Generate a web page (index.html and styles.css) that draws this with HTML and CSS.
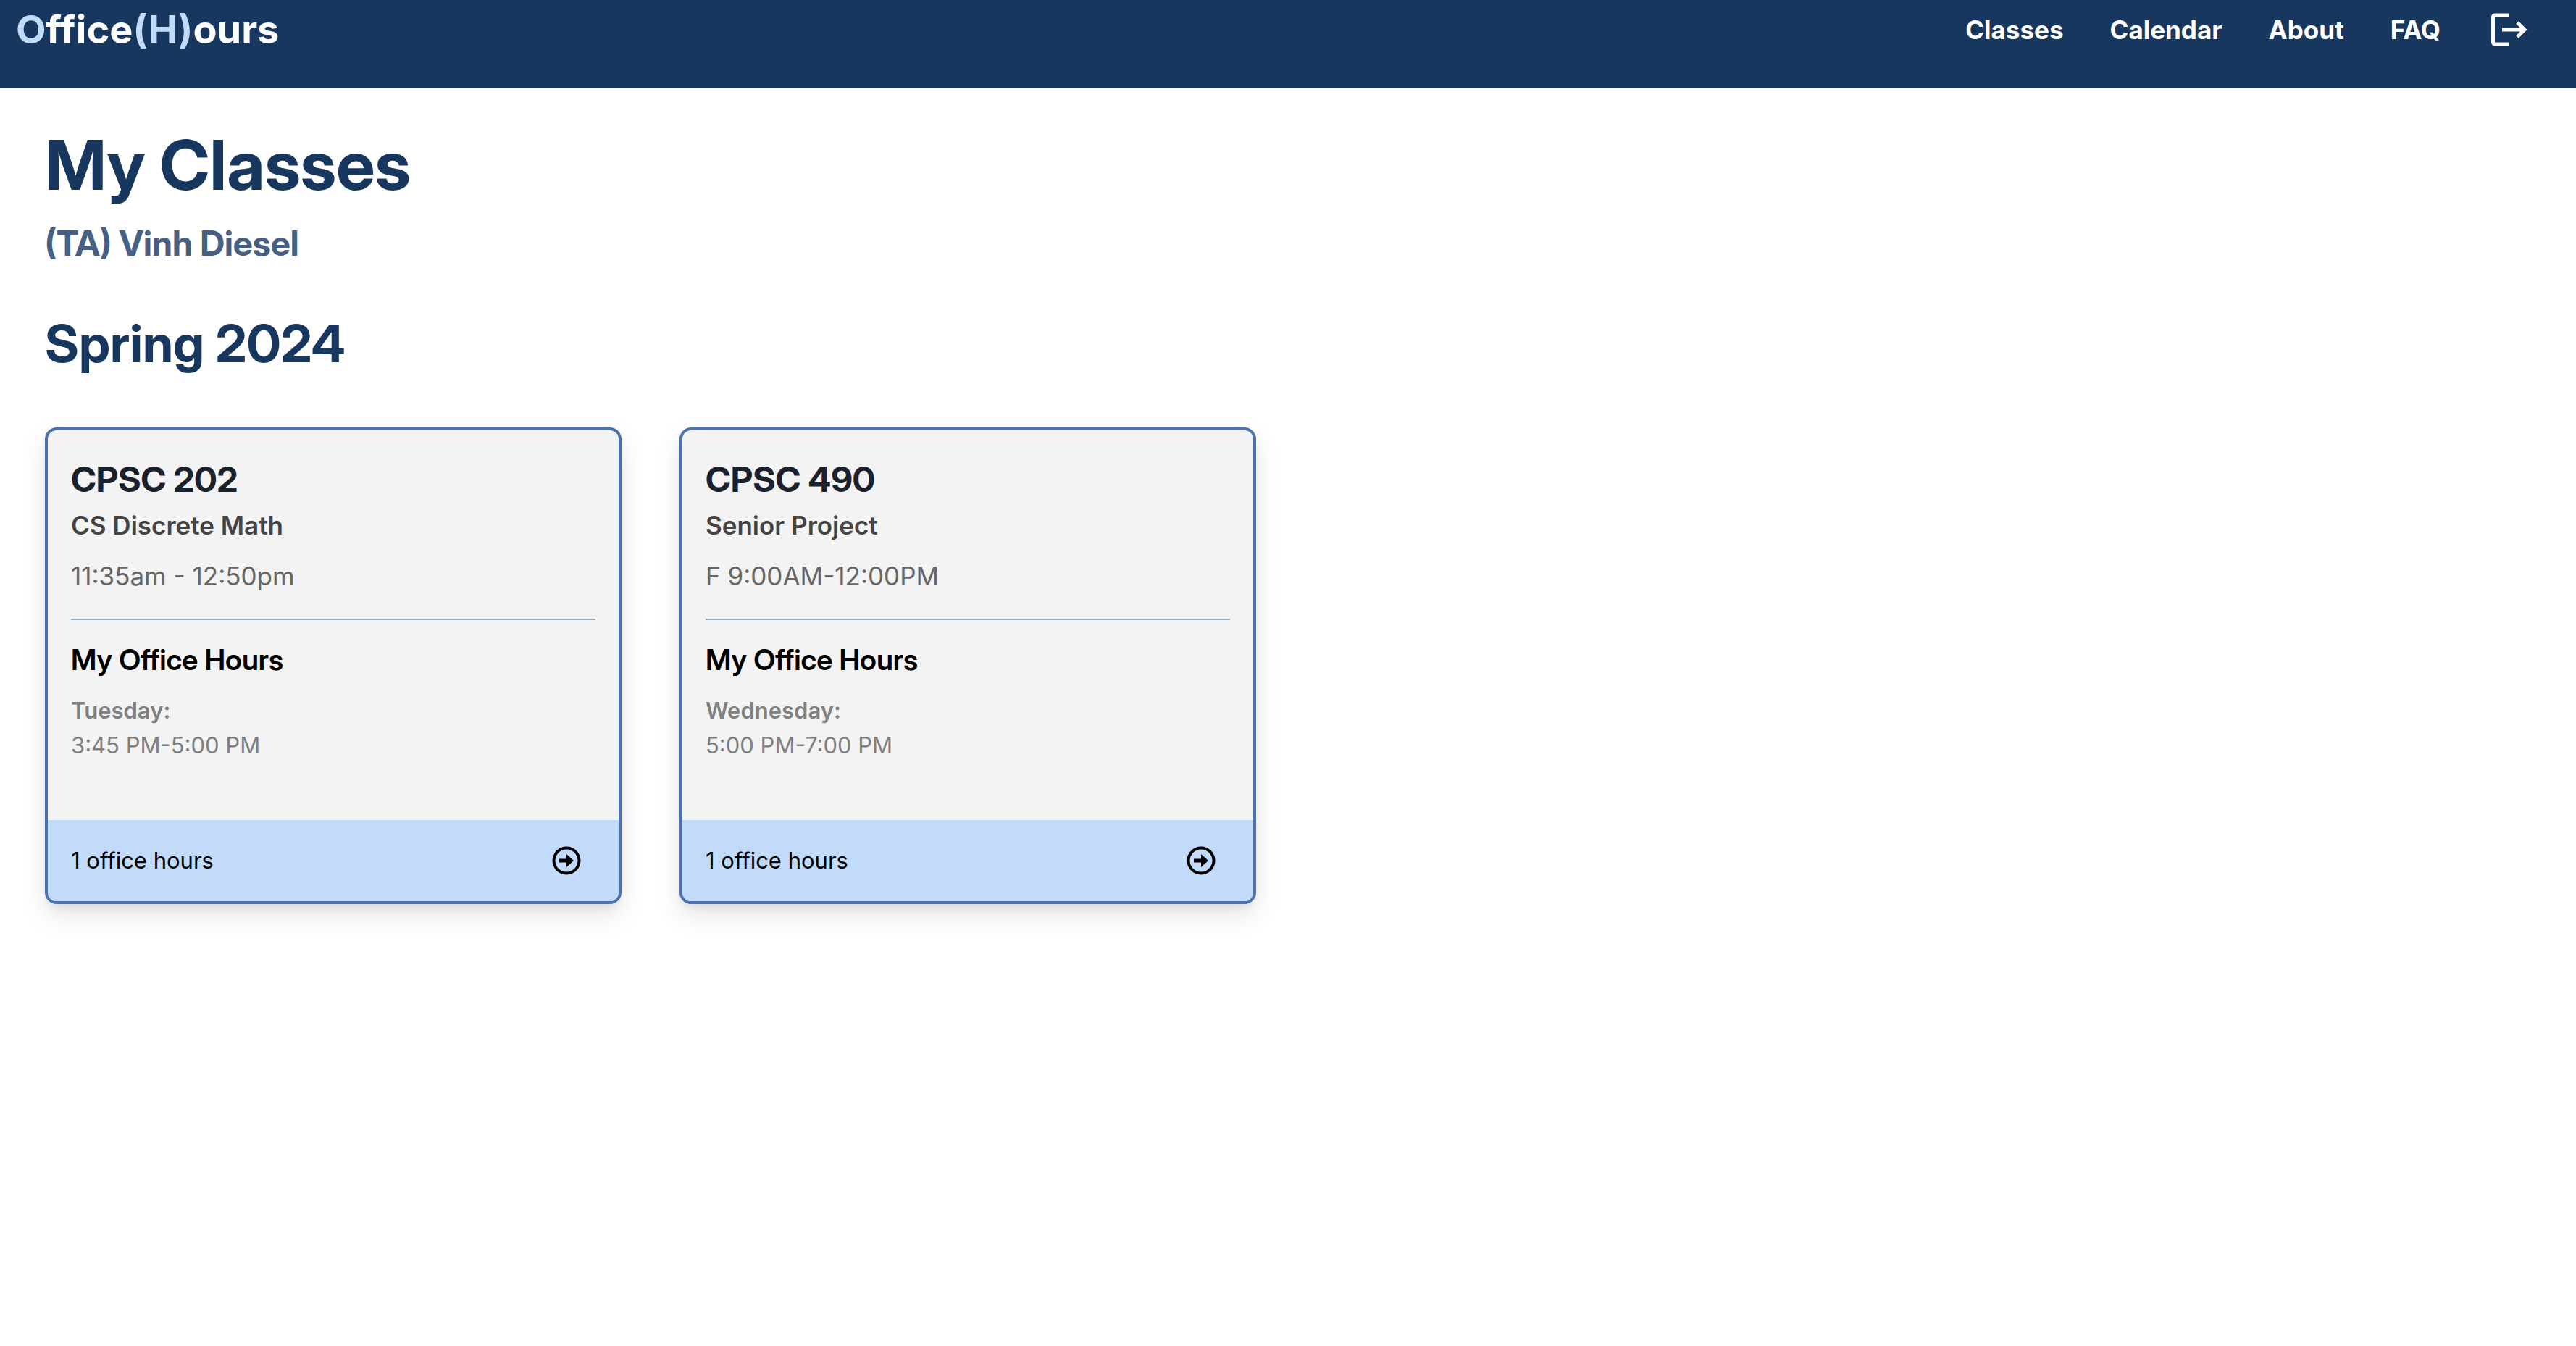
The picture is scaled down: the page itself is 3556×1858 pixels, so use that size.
FILE: index.html
```html
<!DOCTYPE html>
<html lang="en">
<head>
<meta charset="utf-8">
<meta name="viewport" content="width=device-width, initial-scale=1">
<title>Office(H)ours</title>
<link rel="stylesheet" href="styles.css">
</head>
<body>
<header class="site-header">
  <a class="logo" href="#"><span class="logo-accent">O</span>ffice<span class="logo-accent">(H)</span>ours</a>
  <nav class="nav">
    <a href="#classes">Classes</a>
    <a href="#calendar">Calendar</a>
    <a href="#about">About</a>
    <a href="#faq">FAQ</a>
    <button class="icon-button" type="button" aria-label="Log out">
      <svg class="logout-icon" viewBox="0 0 56 48" fill="none" stroke="currentColor" stroke-width="5">
        <path d="M31 4H11a2.500 2.500 0 0 0-2.500 2.500V41.500a2.500 2.500 0 0 0 2.500 2.500H31"/>
        <path d="M21 24H51M42 14L52 24L42 34"/>
      </svg>
    </button>
  </nav>
</header>
<main class="page">
  <h1 class="page-title">My Classes</h1>
  <p class="user-name">(TA) Vinh Diesel</p>
  <h2 class="term">Spring 2024</h2>
  <div class="class-grid">
    <article class="card">
      <div class="card-body">
        <h3 class="course-code">CPSC 202</h3>
        <p class="course-name">CS Discrete Math</p>
        <p class="course-time">11:35am - 12:50pm</p>
        <hr class="divider">
        <h4 class="hours-title">My Office Hours</h4>
        <p class="hours-day">Tuesday:</p>
        <p class="hours-time">3:45 PM-5:00 PM</p>
      </div>
      <footer class="card-footer">
        <span>1 office hours</span>
        <button class="icon-button" type="button" aria-label="Open CPSC 202">
          <svg class="arrow-icon" viewBox="0 0 48 48">
            <circle cx="24" cy="24" r="17.500" fill="none" stroke="currentColor" stroke-width="4"/>
            <path d="M14 21.500H24V15L34 24L24 33V26.500H14Z" fill="currentColor"/>
          </svg>
        </button>
      </footer>
    </article>
    <article class="card">
      <div class="card-body">
        <h3 class="course-code">CPSC 490</h3>
        <p class="course-name">Senior Project</p>
        <p class="course-time">F 9:00AM-12:00PM</p>
        <hr class="divider">
        <h4 class="hours-title">My Office Hours</h4>
        <p class="hours-day">Wednesday:</p>
        <p class="hours-time">5:00 PM-7:00 PM</p>
      </div>
      <footer class="card-footer">
        <span>1 office hours</span>
        <button class="icon-button" type="button" aria-label="Open CPSC 490">
          <svg class="arrow-icon" viewBox="0 0 48 48">
            <circle cx="24" cy="24" r="17.500" fill="none" stroke="currentColor" stroke-width="4"/>
            <path d="M14 21.500H24V15L34 24L24 33V26.500H14Z" fill="currentColor"/>
          </svg>
        </button>
      </footer>
    </article>
  </div>
</main>
</body>
</html>
```
FILE: styles.css
```css
* { box-sizing: border-box; }

body,
h1,
h2,
h3,
h4,
p { margin: 0; }

body {
  background: #fff;
  color: #000;
  font-family: Inter, "Liberation Sans", sans-serif;
}

/* Headings use the display cut of Inter */
.page-title,
.user-name,
.term,
.course-code,
.hours-title { font-family: "Inter Display", Inter, "Liberation Sans", sans-serif; }

.site-header {
  display: flex;
  justify-content: space-between;
  align-items: center;
  padding: 0 67px 42px 22px;
  background: #17375e;
  color: #fff;
}

.logo {
  color: #fff;
  font-size: 54px;
  font-weight: 700;
  line-height: 82px;
  text-decoration: none;
}

.logo-accent { color: #c3dbfb; }

.nav {
  display: flex;
  align-items: center;
  gap: 64px;
}

.nav a {
  color: #fff;
  font-size: 35px;
  font-weight: 700;
  line-height: 80px;
  text-decoration: none;
}

.icon-button {
  display: flex;
  padding: 0;
  border: 0;
  background: none;
  color: inherit;
  cursor: pointer;
}

.logout-icon {
  width: 56px;
  height: 48px;
}

.site-header { padding-bottom: 40px; }

.page { padding: 48px 70px 72px 62px; }

.page-title {
  color: #17375e;
  font-size: 95px;
  font-weight: 700;
  line-height: 116px;
}

.user-name {
  margin-top: 14px;
  color: #456083;
  font-size: 48px;
  font-weight: 700;
  line-height: 72px;
}

.term {
  margin-top: 58px;
  color: #17375e;
  font-size: 72px;
  font-weight: 700;
  line-height: 88px;
}

.class-grid {
  display: grid;
  grid-template-columns: repeat(auto-fill, minmax(760px, 1fr));
  gap: 80px;
  margin-top: 72px;
}

.card {
  overflow: hidden;
  border: 4px solid #4a72ae;
  border-radius: 16px;
  background: #f3f3f3;
  box-shadow: 0 8px 12px -4px rgba(0, 0, 0, 0.08), 0 16px 36px rgba(0, 0, 0, 0.1);
}

.card-body { padding: 32px 32px 79px; }

.course-code {
  color: #1a202c;
  font-size: 48px;
  font-weight: 700;
  line-height: 72px;
}

.course-name {
  color: #444;
  font-size: 35px;
  font-weight: 600;
  line-height: 54px;
}

.course-time {
  margin-top: 16px;
  color: #666;
  font-size: 35px;
  line-height: 54px;
}

.divider {
  margin: 32px 0 25px;
  border: 0;
  border-top: 2px solid #8fa9cf;
}

.hours-title {
  font-size: 40px;
  font-weight: 600;
  line-height: 60px;
}

.hours-day {
  margin-top: 16px;
  color: #808080;
  font-size: 31px;
  font-weight: 600;
  line-height: 48px;
}

.hours-time {
  color: #808080;
  font-size: 31px;
  line-height: 48px;
}

.card-footer {
  display: flex;
  justify-content: space-between;
  align-items: center;
  padding: 32px 48px 32px 32px;
  background: #c3dbfb;
  font-size: 31px;
  line-height: 48px;
}

.arrow-icon {
  width: 48px;
  height: 48px;
}
```
